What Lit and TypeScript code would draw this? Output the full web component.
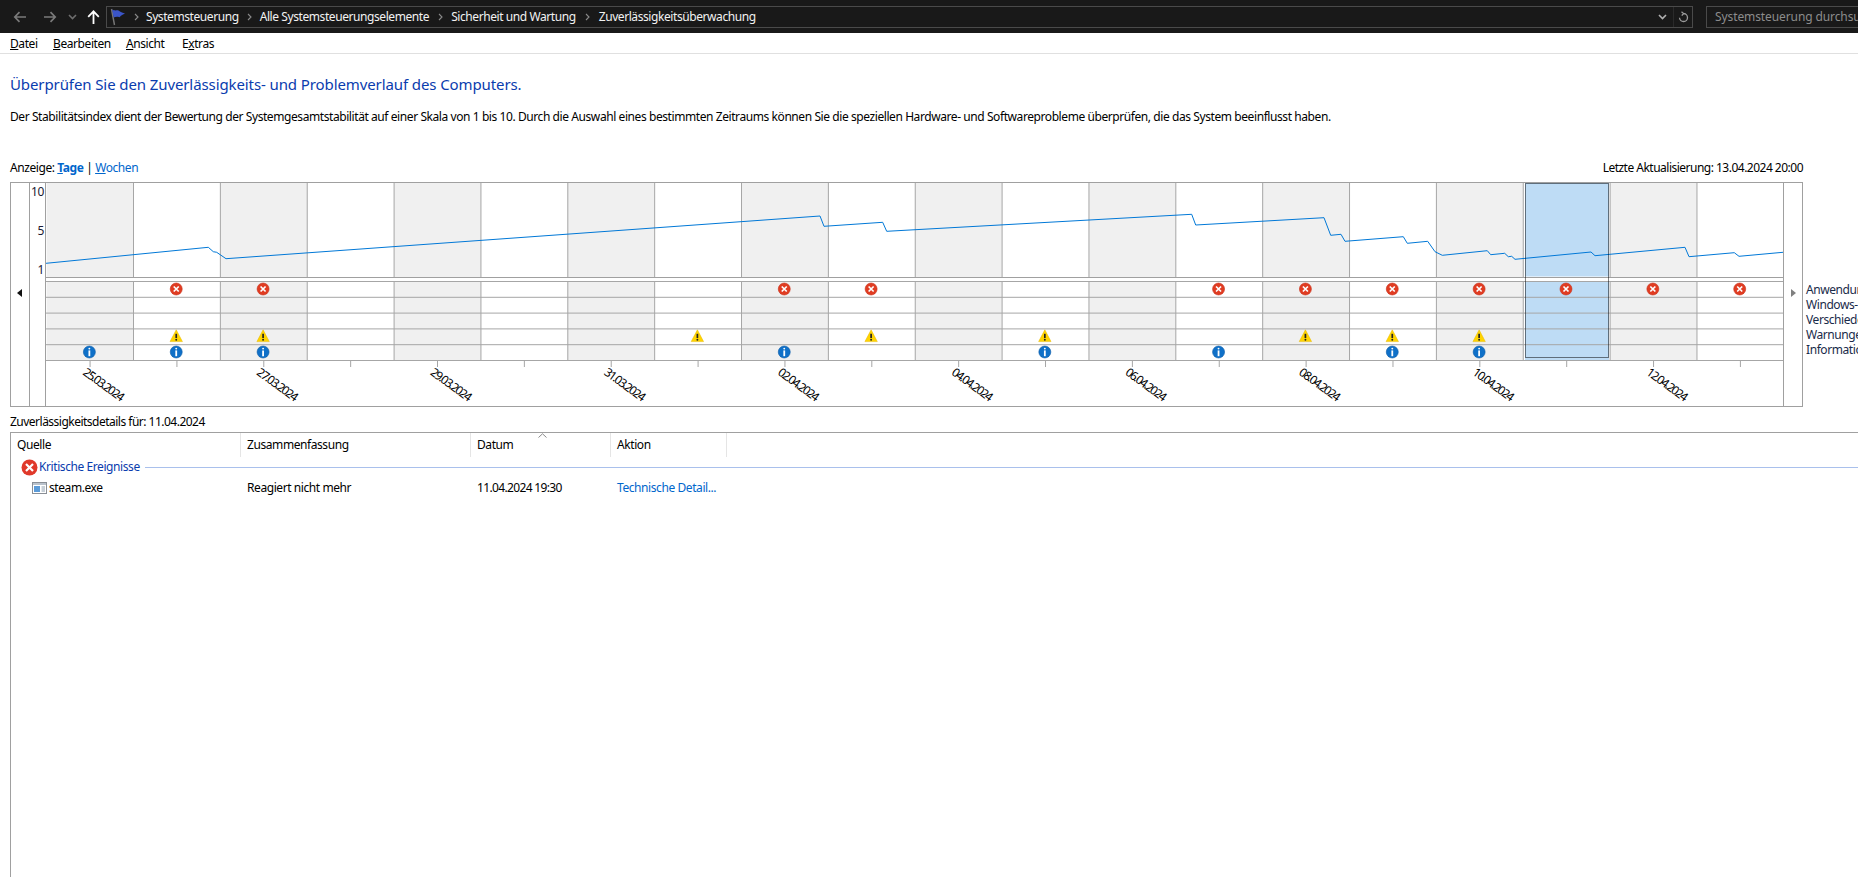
import { LitElement, html, css, svg } from "lit";
import { customElement } from "lit/decorators.js";

const COLS = 20;
const X0 = 46.64;
const CW = 86.86;
const colX = (i: number) => X0 + CW * i;
const colC = (i: number) => colX(i) + CW / 2;
const ICON_DX = -0.7;
const ROWY = [281.5, 297.3, 313.1, 328.9, 344.7, 360.5];
const ERR = [1, 2, 8, 9, 13, 14, 15, 16, 17, 18, 19];
const WARN = [1, 2, 7, 9, 11, 14, 15, 16];
const INFO = [0, 1, 2, 8, 11, 13, 15, 16];
const DATES = ["25.03.2024", "27.03.2024", "29.03.2024", "31.03.2024", "02.04.2024", "04.04.2024", "06.04.2024", "08.04.2024", "10.04.2024", "12.04.2024"];
const LINE = "46,263.3 208.3,247.3 213.3,251.7 216.7,252.3 226,258.7 820,216 824,226.3 882.7,222.3 886.7,231.3 1191.7,214.3 1195.7,225 1324,217.7 1330.7,235.3 1341,234.3 1345,241.3 1403.3,236.7 1407.3,243.3 1427.7,241.3 1435,251.7 1442.3,255.3 1487.3,250.7 1490.7,254.7 1504.7,253.3 1508.3,256.7 1511.7,256.3 1515,259.3 1591,252 1595,255.7 1685,247.3 1689,256.7 1734.3,252.7 1739,256.3 1783,252.3";

const errIcon = (x: number, y: number) => svg`<g transform="translate(${x} ${y})"><circle r="6" fill="#e03c22" stroke="#c9301a" stroke-width=".6"/><path d="M-2.5-2.5 2.5 2.5M2.5-2.5-2.5 2.5" stroke="#fff" stroke-width="1.7" fill="none"/></g>`;
const warnIcon = (x: number, y: number) => svg`<g transform="translate(${x} ${y})"><path d="M0-6.2 6.2 5.6H-6.2Z" fill="#ffd400" stroke="#e8b800" stroke-width=".5"/><path d="M0-2.2V2" stroke="#222" stroke-width="1.7"/><circle cy="3.8" r=".95" fill="#222"/></g>`;
const infoIcon = (x: number, y: number) => svg`<g transform="translate(${x} ${y})"><circle r="6" fill="#0f70c8" stroke="#0b5ca8" stroke-width=".6"/><path d="M0-1.6V4.2" stroke="#fff" stroke-width="1.8"/><circle cy="-3.4" r=".95" fill="#fff"/></g>`;
const chev = (w = 23) => html`<span class="chev" style="width:${w}px"><svg width="5" height="8" viewBox="0 0 5 8"><path d="M1 1l3 3-3 3" stroke="#8a8a8a" stroke-width="1.1" fill="none"/></svg></span>`;

@customElement("app-root")
export class AppRoot extends LitElement {
  static styles = css`
    :host { display: block; height: 100vh; overflow: hidden; background: #fff; color: #000;
      font: 12px/16px "Noto Sans", sans-serif; letter-spacing: -0.42px; }
    .topbar { height: 33px; background: #191919; display: flex; align-items: center; color: #fff; box-sizing: border-box; padding-left: 13px; }
    .nav { display: flex; align-items: center; flex: none; width: 93px; }
    .nav svg { display: block; flex: none; }
    .addr { flex: none; width: 1587px; height: 22px; box-sizing: border-box; border: 1px solid #4a4a4a; display: flex; align-items: center; padding-left: 3px; }
    .crumb { flex: none; color: #f2f2f2; }
    .chev { flex: none; display: flex; justify-content: center; }
    .addr-end { margin-left: auto; display: flex; align-items: center; height: 100%; }
    .drop { width: 22px; display: flex; justify-content: center; border-right: 1px solid #2a2a2a; height: 100%; align-items: center; }
    .ref { width: 18px; display: flex; justify-content: center; }
    .search { flex: none; margin-left: 13px; width: 200px; height: 22px; box-sizing: border-box; border: 1px solid #4a4a4a; color: #8c8c8c; padding-left: 8px; line-height: 20px; white-space: nowrap; letter-spacing: -0.1px; }
    .menu { height: 20px; border-bottom: 1px solid #e0e0e0; display: flex; padding-left: 10px; line-height: 22px; }
    .menu span { flex: none; }
    .m1 { width: 43px; } .m2 { width: 73px; } .m3 { width: 56px; }
    u { text-underline-offset: 1px; }
    h1 { margin: 20px 0 0 10px; font-size: 15px; line-height: 20px; font-weight: 400; color: #0a3cae; letter-spacing: -0.1px; }
    .desc { margin: 15px 0 0 10px; white-space: nowrap; }
    .viewrow { margin: 35px 0 0 10px; width: 1793px; display: flex; justify-content: space-between; }
    .viewrow a { color: #0066cc; }
    .viewrow b { font-weight: 700; }
    .tight { letter-spacing: -0.51px; }
    .chartrow { margin: 6px 0 0 10px; display: flex; width: 1900px; }
    .chart { flex: none; width: 1793px; height: 225px; box-sizing: border-box; border: 1px solid #a0a0a0; display: flex; }
    .side { flex: none; width: 18px; display: flex; justify-content: center; padding: 106px 2px 0 0; box-sizing: border-box; }
    .side svg { display: block; }
    .yaxis { flex: none; width: 17px; box-sizing: border-box; border-left: 1px solid #a0a0a0; border-right: 1px solid #a0a0a0; height: 100%; padding-right: 1px; }
    .yaxis div { height: 94px; box-sizing: border-box; padding-top: 1px; display: flex; flex-direction: column; justify-content: space-between; align-items: flex-end; line-height: 15px; color: #1a1a33; }
    .plot { flex: none; display: block; }
    .sideR { border-left: 1px solid #a0a0a0; width: 19px; padding-right: 0; }
    .legend { flex: none; margin-left: 3px; padding-top: 100px; line-height: 15px; white-space: nowrap; color: #1a2b4a; }
    .plot text { font: 12px "Noto Sans", sans-serif; letter-spacing: -1.5px; fill: #000; }
    .detail-h { margin: 7px 0 0 10px; letter-spacing: -0.51px; }
    .table { margin: 2px 0 0 10px; border-left: 1px solid #a0a0a0; border-top: 1px solid #a0a0a0; height: 500px; position: relative; }
    .grid { display: grid; grid-template-columns: 230px 230px 140px 116px; }
    .th { height: 24px; line-height: 24px; padding-left: 6px; border-right: 1px solid #e5e5e5; }
    .sort { position: absolute; left: 527px; top: 0; display: block; }
    .group { display: flex; align-items: center; height: 20px; padding-left: 10px; color: #0a3cae; }
    .group svg { flex: none; display: block; margin-right: 1px; }
    .group i { flex: 1; height: 1px; background: #a9c0ec; margin-left: 5px; }
    .td { height: 22px; line-height: 22px; padding-left: 6px; white-space: nowrap; }
    .td.src { padding-left: 21px; display: flex; align-items: center; gap: 2px; }
    .td.when { letter-spacing: -0.65px; }
    .td a { color: #0066cc; }
  `;

  render() {
    return html`
      <div class="topbar">
        <div class="nav">
          <svg width="14" height="12" viewBox="0 0 14 12"><path d="M13 6H2M6.5 1.2 1.8 6l4.7 4.8" stroke="#7a7a7a" stroke-width="1.7" fill="none"/></svg>
          <svg style="margin-left:16px" width="14" height="12" viewBox="0 0 14 12"><path d="M1 6h11M7.5 1.2 12.2 6l-4.7 4.8" stroke="#7a7a7a" stroke-width="1.7" fill="none"/></svg>
          <svg style="margin-left:11px" width="9" height="6" viewBox="0 0 9 6"><path d="M1 1l3.5 3.5L8 1" stroke="#6e6e6e" stroke-width="1.6" fill="none"/></svg>
          <svg style="margin-left:10px" width="13" height="14" viewBox="0 0 13 14"><path d="M6.5 14V2M1.2 6.8 6.5 1.4l5.3 5.4" stroke="#fff" stroke-width="1.8" fill="none"/></svg>
        </div>
        <div class="addr">
          <svg width="16" height="18" viewBox="0 0 16 18" style="flex:none"><path d="M1.5 1 4.5 17" stroke="#777" stroke-width="1.4"/><path d="M2 1.5c3 1.6 5 .4 6.5 1 1.4.6 2.900 2.400 6.500 3-2 1-4 2-5.500 3.800-2-.6-3.800-.6-5.800.2Z" fill="#3b55c8"/></svg>
          ${chev(20)}
          <span class="crumb">Systemsteuerung</span>
          ${chev(21)}
          <span class="crumb">Alle Systemsteuerungselemente</span>
          ${chev(22)}
          <span class="crumb">Sicherheit und Wartung</span>
          ${chev(23)}
          <span class="crumb">Zuverlässigkeitsüberwachung</span>
          <div class="addr-end">
            <span class="drop"><svg width="9" height="6" viewBox="0 0 9 6"><path d="M1 1l3.5 3.5L8 1" stroke="#b0b0b0" stroke-width="1.6" fill="none"/></svg></span>
            <span class="ref"><svg width="11" height="12" viewBox="0 0 11 12"><path d="M5.500 2.500a4 4 0 1 1-4 4.300M5.500 2.500 3.500.8M5.500 2.500 3.800 4.600" stroke="#9a9a9a" stroke-width="1.3" fill="none"/></svg></span>
          </div>
        </div>
        <div class="search">Systemsteuerung durchsuchen</div>
      </div>
      <div class="menu">
        <span class="m1"><u>D</u>atei</span><span class="m2"><u>B</u>earbeiten</span><span class="m3"><u>A</u>nsicht</span><span>E<u>x</u>tras</span>
      </div>
      <h1>Überprüfen Sie den Zuverlässigkeits- und Problemverlauf des Computers.</h1>
      <div class="desc">Der Stabilitätsindex dient der Bewertung der Systemgesamtstabilität auf einer Skala von 1 bis 10. Durch die Auswahl eines bestimmten Zeitraums können Sie die speziellen Hardware- und Softwareprobleme überprüfen, die das System beeinflusst haben.</div>
      <div class="viewrow">
        <span>Anzeige: <a><b><u>T</u>age</b></a> | <a><u>W</u>ochen</a></span>
        <span class="tight">Letzte Aktualisierung: 13.04.2024 20:00</span>
      </div>
      <div class="chartrow">
        <div class="chart">
          <div class="side"><svg width="5" height="8" viewBox="0 0 5 8"><path d="M5 0V8L0 4Z" fill="#111"/></svg></div>
          <div class="yaxis"><div><span>10</span><span>5</span><span>1</span></div></div>
          ${this.plot()}
          <div class="side sideR"><svg width="5" height="8" viewBox="0 0 5 8"><path d="M0 0V8L5 4Z" fill="#808080"/></svg></div>
        </div>
        <div class="legend">Anwendungsfehler<br>Windows-Fehler<br>Verschiedene Fehler<br>Warnungen<br>Informationen</div>
      </div>
      <div class="detail-h">Zuverlässigkeitsdetails für: 11.04.2024</div>
      <div class="table">
        <div class="grid">
          <div class="th">Quelle</div><div class="th">Zusammenfassung</div><div class="th">Datum</div><div class="th">Aktion</div>
        </div>
        <svg class="sort" width="9" height="5" viewBox="0 0 9 5"><path d="M.5 4.500 4.500.8l4 3.700" stroke="#8a8a8a" fill="none"/></svg>
        <div class="group">
          <svg width="17" height="17" viewBox="0 0 17 17"><circle cx="8.500" cy="8.500" r="8" fill="#e0392a"/><path d="M5 5l7 7M12 5l-7 7" stroke="#fff" stroke-width="2.2"/></svg>
          <span>Kritische Ereignisse</span><i></i>
        </div>
        <div class="grid">
          <div class="td src"><svg width="15" height="12" viewBox="0 0 15 12"><rect x=".5" y=".5" width="14" height="11" fill="#fff" stroke="#8a8f96"/><rect x="1" y="1" width="13" height="2" fill="#b9c2cc"/><rect x="2" y="4" width="6" height="6" fill="#5b9bd8"/><path d="M9.500 5H13M9.500 7H13M9.500 9H13" stroke="#8fa0b0"/></svg><span>steam.exe</span></div>
          <div class="td">Reagiert nicht mehr</div>
          <div class="td when">11.04.2024 19:30</div>
          <div class="td"><a>Technische Detail...</a></div>
        </div>
      </div>
    `;
  }

  plot() {
    const cols = Array.from({ length: COLS }, (_, i) => i);
    return svg`<svg class="plot" width="1737" height="223" viewBox="46 183 1737 223">
      ${cols.filter((i) => i % 2 === 0).map((i) => svg`<rect x=${colX(i)} y="183" width=${CW} height="177.5" fill="#f0f0f0"/>`)}
      <rect x="46" y="277.5" width="1737" height="4" fill="#fff"/>
      <rect x="1525" y="183" width="84" height="93.5" fill="#bedcf5"/>
      <rect x="1525" y="282" width="84" height="78" fill="#bedcf5"/>
      ${cols.map((i) => (i === 0 ? "" : svg`<path d="M${colX(i)} 183V277.5M${colX(i)} 281.5V360.5" stroke="#a6a6a6" fill="none"/>`))}
      <path d="M46 277.5H1783" stroke="#a0a0a0"/>
      ${ROWY.map((y) => svg`<path d="M46 ${y}H1783" stroke="#a6a6a6"/>`)}
      ${cols.map((i) => svg`<path d="M${colC(i)} 360.5V367" stroke="#a6a6a6"/>`)}
      <polyline points=${LINE} fill="none" stroke="#0078d7" stroke-width="1"/>
      ${ERR.map((i) => errIcon(colC(i) + ICON_DX, 289))}
      ${WARN.map((i) => warnIcon(colC(i) + ICON_DX, 336))}
      ${INFO.map((i) => infoIcon(colC(i) + ICON_DX, 352))}
      <rect x="1525.5" y="183.5" width="83" height="174" fill="none" stroke="#000" stroke-dasharray="1 1"/>
      ${DATES.map((d, k) => svg`<text transform="translate(${colC(k * 2) - 8} 374) rotate(36)">${d}</text>`)}
    </svg>`;
  }
}
